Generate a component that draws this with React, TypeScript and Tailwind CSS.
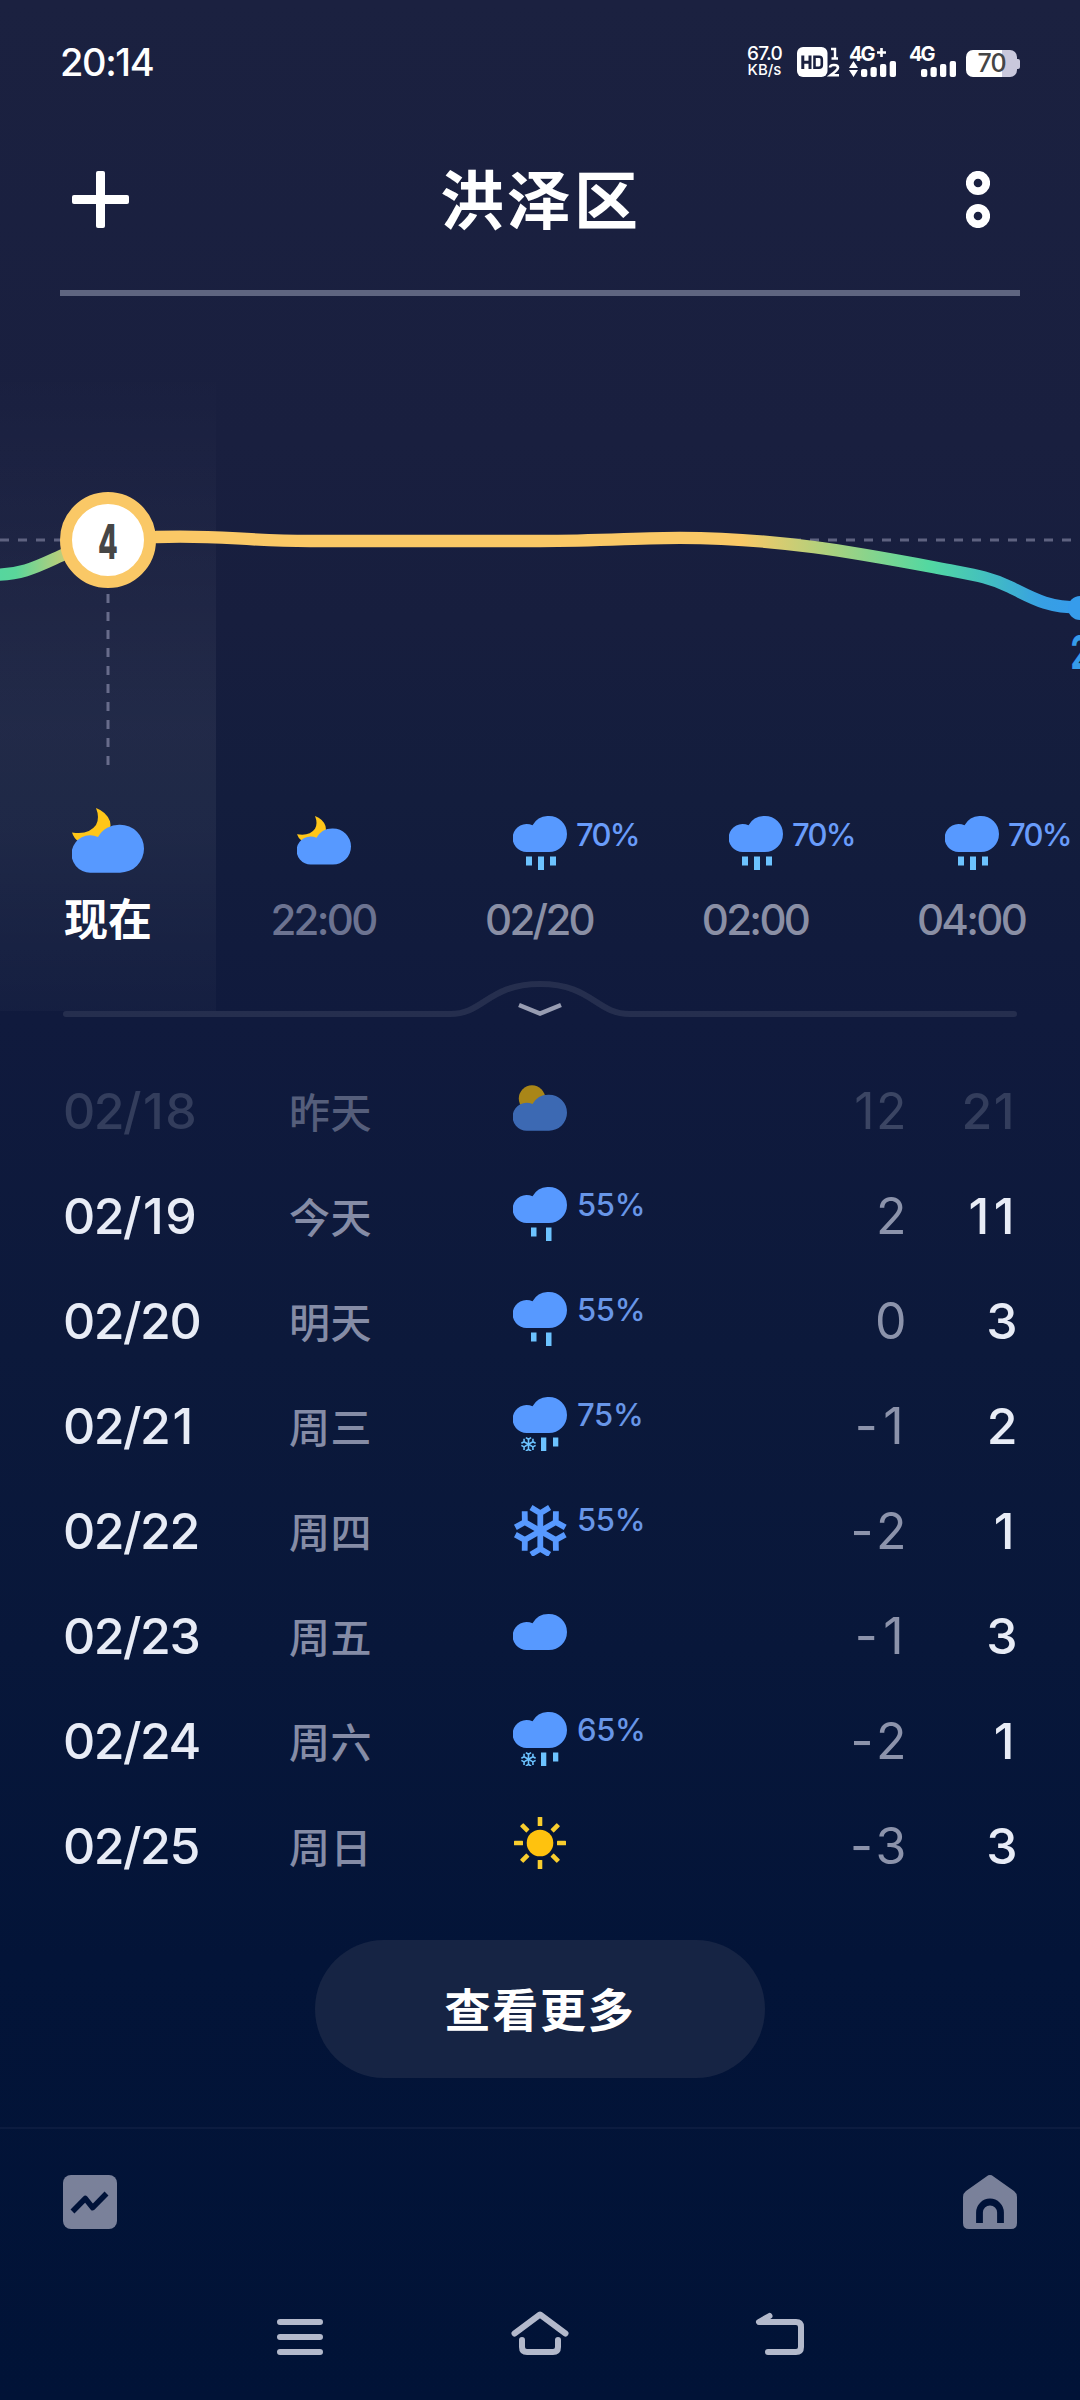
import React from "react";

const CLOUD = "M14 36A14 14 0 1 1 19.500 9.300A18.200 18.200 0 0 1 36 0A18 18 0 0 1 36 36Z";

type IconKind = "moon" | "partly" | "rain3" | "rain2" | "sleet" | "snow" | "cloud" | "sun";

function Flake({ cx, cy, r, w, color }: { cx: number; cy: number; r: number; w: number; color: string }) {
  return (
    <g stroke={color} strokeWidth={w} fill="none">
      {[0, 60, 120, 180, 240, 300].map((a) => (
        <path
          key={a}
          transform={`translate(${cx} ${cy}) rotate(${a})`}
          d={`M0 0V${-r * 0.68}M${-r * 0.35} ${-r * 0.88}L0 ${-r * 0.67}L${r * 0.35} ${-r * 0.88}`}
        />
      ))}
    </g>
  );
}

function WeatherIcon({ kind, size = 54 }: { kind: IconKind; size?: number }) {
  const drop = "#6cc3ff";
  return (
    <svg width={size} height={size} viewBox="0 0 54 54" className="shrink-0">
      {kind === "moon" && (
        <>
          <path d="M18 0Q21 7.500 18 12.800Q12.500 20.500 0 18.300Q1.500 23 5 25L26 22Q30 16 28.500 10Q26 3 18 0Z" fill="#ffc619" />
          <path transform="translate(0 12.500)" d={CLOUD} fill="#5799ff" />
        </>
      )}
      {kind === "partly" && (
        <>
          <circle cx="19" cy="16.500" r="13.200" fill="#a98618" />
          <path transform="translate(0 12.700)" d={CLOUD} fill="#3c69b3" />
        </>
      )}
      {kind === "cloud" && <path transform="translate(0 7)" d={CLOUD} fill="#5799ff" />}
      {(kind === "rain3" || kind === "rain2" || kind === "sleet") && <path d={CLOUD} fill="#5799ff" />}
      {kind === "rain3" && (
        <path fill={drop} d="M13 40.500h6v9h-6zM25 40.500h6v13.500h-6zM37 40.500h6v9h-6z" />
      )}
      {kind === "rain2" && <path fill={drop} d="M18 40.500h5.500v9H18zM33 40.500h5.500v13.500H33z" />}
      {kind === "sleet" && (
        <>
          <Flake cx={15.5} cy={47.3} r={7.6} w={1.6} color={drop} />
          <path fill={drop} d="M28 40.500h5.300v13.500H28zM40 40.500h5.300v9H40z" />
        </>
      )}
      {kind === "snow" && <Flake cx={27.3} cy={29} r={26.6} w={5.8} color="#5799ff" />}
      {kind === "sun" && (
        <>
          <circle cx="27" cy="26" r="13.300" fill="#ffc20e" />
          {[0, 45, 90, 135, 180, 225, 270, 315].map((a) => (
            <rect key={a} x="24.700" y="0" width="4.600" height="9" rx=".6" fill="#f8cd2e" transform={`rotate(${a} 27 26)`} />
          ))}
        </>
      )}
    </svg>
  );
}

/* Widens the narrow "1" and the minus sign to keep figures evenly set. */
function Figures({ value }: { value: string }) {
  return (
    <>
      {value.split("").map((c, i) =>
        c === "1" ? (
          <span key={i} className="px-[3px]">1</span>
        ) : c === "-" ? (
          <span key={i} className="mr-[4px]">-</span>
        ) : (
          c
        ),
      )}
    </>
  );
}

function SignalBars() {
  return (
    <svg width="36" height="16" viewBox="0 0 36 16" fill="#fff">
      <rect x="0" y="8" width="6.300" height="8" rx="2" />
      <rect x="9.500" y="6" width="6.300" height="10" rx="2" />
      <rect x="19" y="3" width="6.300" height="13" rx="2" />
      <rect x="28.700" y="0" width="6.300" height="16" rx="2" />
    </svg>
  );
}

function StatusBar() {
  return (
    <div className="flex h-[124px] items-center justify-between pl-[60px] pr-[60px] text-white">
      <span className="text-[38px] font-medium leading-none tracking-[-1.400px]">20:14</span>
      <div className="flex h-[30px] items-end">
        <div className="mr-[14px] flex w-[37px] flex-col items-center">
          <span className="text-[19px] font-medium leading-[17px] tracking-[-0.8px]">67.0</span>
          <span className="text-[15px] font-medium leading-[15px] tracking-[0px]">KB/s</span>
        </div>
        <svg width="44" height="30" viewBox="0 0 44 30" className="mr-[8px]">
          <rect width="30.500" height="30" rx="6" fill="#fff" />
          <path d="M5.800 8.500v13.500M13 8.500v13.500M5.800 15.200H13" stroke="#1a203f" strokeWidth="3" fill="none" />
          <path d="M17.500 22V9.800H22Q24.800 9.800 24.800 12.500V18Q24.800 20.700 22 20.700H17.500" stroke="#1a203f" strokeWidth="2.600" fill="none" />
          <path d="M34 2h4v9.500M34.500 11.500h6.500" stroke="#fff" strokeWidth="2.400" fill="none" />
          <path d="M33 20.500Q33 18 37 18Q41 18 41 20.700Q41 22.500 33.500 28.300H42" stroke="#fff" strokeWidth="2.600" fill="none" />
        </svg>
        <div className="mr-[13px] flex w-[47px] flex-col items-start">
          <span className="flex h-[14px] items-center whitespace-nowrap text-[20px] font-bold leading-none tracking-[-2px]">
            4G
            <svg width="9" height="9" viewBox="0 0 9 9" className="-mt-[4px] ml-[3px]">
              <path d="M4.500 0V9M0 4.500H9" stroke="#fff" strokeWidth="2.600" />
            </svg>
          </span>
          <div className="flex items-end gap-[3px]">
            <svg width="9" height="16" viewBox="0 0 9 16" fill="#fff">
              <path d="M4.500 0L9 7H0zM4.500 16L0 9h9z" />
            </svg>
            <SignalBars />
          </div>
        </div>
        <div className="mr-[9px] flex w-[48px] flex-col">
          <span className="flex h-[14px] items-center text-[20px] font-bold leading-none tracking-[-2px]">4G</span>
          <div className="flex justify-end">
            <SignalBars />
          </div>
        </div>
        <div className="flex items-center">
          <div className="flex h-[27px] w-[51px] items-center justify-center rounded-[7px] bg-[linear-gradient(90deg,#fff_36px,#c9c8dc_36px)]">
            <span className="text-[25px] font-medium leading-none tracking-[-1px] text-[#454545]">70</span>
          </div>
          <div className="h-[10px] w-[3px] rounded-r-[2px] bg-[#c9c8dc]" />
        </div>
      </div>
    </div>
  );
}

function Header() {
  return (
    <header className="mx-[60px] flex h-[172px] items-start justify-between border-b-[6px] border-[#5f6580] pl-[12px] pr-[30px]">
      <svg width="57" height="57" viewBox="0 0 57 57" className="mt-[47px]" fill="#fff">
        <rect x="24" width="9" height="57" rx="2" />
        <rect y="24" width="57" height="9" rx="2" />
      </svg>
      <h1 className="ml-[16px] mt-[43px] text-[64px] font-bold leading-[68px] tracking-[3px] text-white">洪泽区</h1>
      <svg width="24" height="57" viewBox="0 0 24 57" className="ml-[30px] mt-[47px]" fill="none" stroke="#fff" strokeWidth="7.800">
        <circle cx="12" cy="12" r="8.200" />
        <circle cx="12" cy="45" r="8.200" />
      </svg>
    </header>
  );
}

function TemperatureChart() {
  return (
    <svg width="1080" height="494" viewBox="0 296 1080 494" className="relative block">
      <defs>
        <linearGradient id="temp" gradientUnits="userSpaceOnUse" x1="0" x2="1080" y1="0" y2="0">
          <stop offset="0" stopColor="#56d69e" />
          <stop offset=".015" stopColor="#5ad69a" />
          <stop offset=".085" stopColor="#fac866" />
          <stop offset=".685" stopColor="#fac866" />
          <stop offset=".77" stopColor="#a9d17f" />
          <stop offset=".86" stopColor="#53d8a1" />
          <stop offset=".91" stopColor="#44c1bd" />
          <stop offset=".965" stopColor="#379fe4" />
          <stop offset="1" stopColor="#369ceb" />
        </linearGradient>
      </defs>
      <path d="M0 540H1080" stroke="#5e6280" strokeWidth="3" strokeDasharray="9 9" />
      <path d="M108 594V770" stroke="#686c8b" strokeWidth="3" strokeDasharray="9 9" />
      <path
        d="M-10 575C25 575 40 565 66 553.500C90 542 120 537.500 156 537C220 534.500 240 541 310 541H540C600 541 640 537.800 680 537.800C785 538 870 555.500 954 571C975 575 992 578 1010 587C1034 599 1048 607.500 1080 607.500"
        stroke="url(#temp)"
        strokeWidth="12.300"
        fill="none"
      />
      <circle cx="108" cy="540" r="42" fill="#fff" stroke="#fac866" strokeWidth="12" />
      <circle cx="1080" cy="608" r="12" fill="#369ceb" />
      <text transform="translate(108 559) scale(.6 1)" textAnchor="middle" fontSize="48" fontWeight="800" fill="#464646">
        4
      </text>
      <text transform="translate(1080 669) scale(.64 1)" textAnchor="middle" fontSize="47" fontWeight="700" fill="#369ceb">
        2
      </text>
    </svg>
  );
}

const hours: { label: string; icon: IconKind; rain?: string; color: string }[] = [
  { label: "22:00", icon: "moon", color: "text-[#6c7391]" },
  { label: "02/20", icon: "rain3", rain: "70%", color: "text-[#8a8fa5]" },
  { label: "02:00", icon: "rain3", rain: "70%", color: "text-[#8a8fa5]" },
  { label: "04:00", icon: "rain3", rain: "70%", color: "text-[#8a8fa5]" },
];

function Hourly() {
  return (
    <section className="relative">
      <div className="absolute inset-y-0 left-0 w-[216px] bg-[linear-gradient(180deg,rgba(255,255,255,0)_10%,rgba(255,255,255,.055)_60%,rgba(255,255,255,.05)_75%,rgba(255,255,255,.02)_100%)]" />
      <TemperatureChart />
      <div className="relative grid h-[221px] grid-cols-5">
        <div className="flex flex-col items-center">
          <div className="mt-[18px]">
            <WeatherIcon kind="moon" size={72} />
          </div>
          <span className="mt-[18px] text-[44px] font-semibold leading-[44px] text-white">现在</span>
        </div>
        {hours.map((h) => (
          <div key={h.label} className="flex flex-col items-center">
            <div className="relative mt-[26px]">
              <WeatherIcon kind={h.icon} />
              {h.rain && (
                <span className="absolute left-[63px] top-[3px] text-[31px] font-medium leading-[31px] tracking-[-1.700px] text-[#699cfb]">
                  {h.rain}
                </span>
              )}
            </div>
            <span className={`mt-[28px] -ml-[2px] text-[42px] font-medium leading-[44px] tracking-[-2.700px] ${h.color}`}>{h.label}</span>
          </div>
        ))}
      </div>
    </section>
  );
}

function Handle() {
  return (
    <svg width="954" height="48" viewBox="63 975 954 48" className="relative mx-[63px] -mt-[36px] block" fill="none">
      <path
        d="M66 1014H450C484 1014 488 984 540 984C592 984 596 1014 630 1014H1014"
        stroke="#fff"
        strokeOpacity=".09"
        strokeWidth="6"
        strokeLinecap="round"
      />
      <path d="M519 1005L540 1013.500L561 1005" stroke="#989db2" strokeWidth="4.500" />
    </svg>
  );
}

const days: { date: string; week: string; icon: IconKind; rain?: string; low: string; high: string; past?: boolean }[] = [
  { date: "02/18", week: "昨天", icon: "partly", low: "12", high: "21", past: true },
  { date: "02/19", week: "今天", icon: "rain2", rain: "55%", low: "2", high: "11" },
  { date: "02/20", week: "明天", icon: "rain2", rain: "55%", low: "0", high: "3" },
  { date: "02/21", week: "周三", icon: "sleet", rain: "75%", low: "-1", high: "2" },
  { date: "02/22", week: "周四", icon: "snow", rain: "55%", low: "-2", high: "1" },
  { date: "02/23", week: "周五", icon: "cloud", low: "-1", high: "3" },
  { date: "02/24", week: "周六", icon: "sleet", rain: "65%", low: "-2", high: "1" },
  { date: "02/25", week: "周日", icon: "sun", low: "-3", high: "3" },
];

function Daily() {
  return (
    <section className="mt-[35px] px-[63px]">
      {days.map((d) => (
        <div key={d.date} className="flex h-[105px] items-center text-[50px] font-medium leading-none tracking-[-1.500px]">
          <span className={`w-[226px] ${d.past ? "text-[#333d5c]" : "text-[#e8ecf6]"}`}>
            <Figures value={d.date} />
          </span>
          <span className={`mt-[5px] w-[224px] text-[41px] leading-none tracking-[0.5px] ${d.past ? "text-[#555e7b]" : "text-[#858ca6]"}`}>
            {d.week}
          </span>
          <div className="-mt-[4px] flex items-start">
            <WeatherIcon kind={d.icon} />
            {d.rain && (
              <span className="ml-[10px] mt-[2px] text-[31px] leading-[31px] tracking-[-0.300px] text-[#6896e8]">{d.rain}</span>
            )}
          </div>
          <span className={`ml-auto font-normal ${d.past ? "text-[#3b4563]" : "text-[#8c93ab]"}`}>
            <Figures value={d.low} />
          </span>
          <span className={`w-[111px] text-right ${d.past ? "text-[#333d5c]" : "text-[#e8ecf6]"}`}>
            <Figures value={d.high} />
          </span>
          <span className="w-[1px]" />
        </div>
      ))}
    </section>
  );
}

function TabBar() {
  return (
    <nav className="mt-[49px] flex h-[144px] items-start justify-between border-t-[2px] border-[#0c1c40] px-[63px] pt-[46px]">
      <svg width="54" height="54" viewBox="0 0 54 54">
        <rect width="54" height="54" rx="8" fill="#7a819a" />
        <path d="M9.500 36.500L22.300 23.500L29.700 32.700L43.500 18.500" stroke="#001238" strokeWidth="5.500" strokeLinejoin="round" fill="none" />
      </svg>
      <svg width="54" height="54" viewBox="0 0 54 54">
        <path d="M23.500 1.400Q27 -1.200 30.500 1.400L51 16Q54 18.300 54 22V48Q54 54 48 54H6Q0 54 0 48V22Q0 18.300 3 16Z" fill="#7a819a" />
        <path d="M16.500 48V37.500A10.500 10.500 0 0 1 37.500 37.500V48" stroke="#001238" strokeWidth="6.800" fill="none" />
      </svg>
    </nav>
  );
}

function SystemNav() {
  return (
    <div className="flex h-[128px] items-start justify-center gap-[170px] pt-[37px]">
      <svg width="70" height="54" viewBox="265 2308 70 54" stroke="#b3b9cb" strokeWidth="6" strokeLinecap="round" fill="none">
        <path d="M280 2322H320M280 2337H320M280 2352H320" />
      </svg>
      <svg width="70" height="54" viewBox="505 2308 70 54" stroke="#b3b9cb" strokeWidth="6" strokeLinecap="round" strokeLinejoin="round" fill="none">
        <path d="M514.500 2333.500L540 2314.500L565.500 2333.500" />
        <path d="M522 2340V2347Q522 2352 527 2352H553Q558 2352 558 2347V2340" />
      </svg>
      <svg width="70" height="54" viewBox="745 2308 70 54" stroke="#b3b9cb" strokeWidth="6" strokeLinecap="round" strokeLinejoin="round" fill="none">
        <path d="M769.500 2316L759 2322H796Q801 2322 801 2327V2347Q801 2352 796 2352H768" />
      </svg>
    </div>
  );
}

export default function App() {
  return (
    <main className="flex h-[2400px] w-[1080px] flex-col overflow-hidden bg-[linear-gradient(180deg,#1b2140_0px,#191f3f_440px,#171e3e_620px,#131d3d_800px,#101a3d_1020px,#0c193b_1350px,#08173a_1650px,#031438_1960px,#011337_2400px)] font-['Inter','Noto_Sans_CJK_SC',sans-serif]">
      <StatusBar />
      <Header />
      <Hourly />
      <Handle />
      <Daily />
      <button className="mx-auto mt-[42px] flex h-[138px] w-[450px] shrink-0 items-center justify-center rounded-full bg-[#162444] pt-[2px] text-[46px] font-bold leading-none tracking-[1.800px] text-white">
        查看更多
      </button>
      <TabBar />
      <SystemNav />
    </main>
  );
}
